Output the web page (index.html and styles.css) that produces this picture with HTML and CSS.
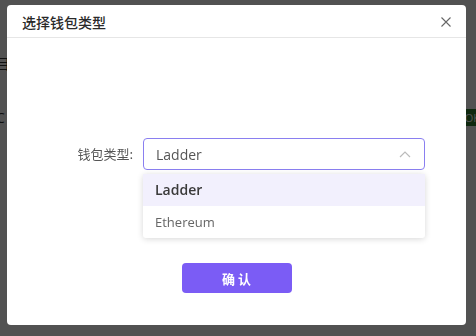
FILE: index.html
```html
<!DOCTYPE html>
<html>
<head>
<meta charset="utf-8">
<link rel="stylesheet" href="styles.css">
</head>
<body>
<div class="page">
  <div class="page-row"><span class="page-text">目</span></div>
  <div class="page-row2"><span class="page-text">C</span><span class="badge">OK</span></div>
</div>
<div class="overlay"></div>
<div class="modal">
  <div class="modal-header">
    <span class="modal-title">选择钱包类型</span>
    <svg class="close" width="12" height="12" viewBox="0 0 12 12"><path d="M1.5 1.5L10.5 10.5M10.5 1.5L1.5 10.5" stroke="#666" stroke-width="1.1" fill="none"/></svg>
  </div>
  <div class="modal-body">
    <div class="form-row">
      <label class="form-label">钱包类型:</label>
      <div class="select">
        <div class="select-box">
          <span class="select-value">Ladder</span>
          <svg class="arrow" width="12" height="8" viewBox="0 0 12 8"><path d="M1 7L6 2L11 7" stroke="#bbb" stroke-width="1.2" fill="none"/></svg>
        </div>
        <ul class="dropdown">
          <li class="option selected">Ladder</li>
          <li class="option">Ethereum</li>
        </ul>
      </div>
    </div>
    <div class="actions">
      <button class="btn">确 认</button>
    </div>
  </div>
</div>
</body>
</html>
```
FILE: styles.css
```css
html, body {
  margin: 0;
  padding: 0;
  width: 476px;
  height: 336px;
  overflow: hidden;
  font-family: "Open Sans", "Noto Sans CJK SC", sans-serif;
}
.page {
  background: #fff;
  height: 336px;
  padding-top: 52px;
  box-sizing: border-box;
}
.page-row {
  height: 20px;
}
.page-row2 {
  margin-top: 36px;
  display: flex;
  justify-content: space-between;
  align-items: center;
}
.page-text {
  font-size: 14px;
  color: #333;
  margin-left: -4px;
}
.badge {
  background: #2f7d2f;
  color: #fff;
  font-size: 11px;
  padding: 1px 6px;
  margin-right: -10px;
}
.overlay {
  position: fixed;
  inset: 0;
  background: rgba(0, 0, 0, 0.68);
}
.modal {
  position: fixed;
  left: 7px;
  top: 5px;
  width: 459px;
  height: 320px;
  background: #fff;
  border-radius: 4px;
  display: flex;
  flex-direction: column;
}
.modal-header {
  height: 32px;
  border-bottom: 1px solid #e6e6e6;
  display: flex;
  align-items: center;
  justify-content: space-between;
  padding: 0 14px 0 15px;
}
.modal-title {
  font-family: "Noto Sans CJK SC", sans-serif;
  font-size: 14px;
  font-weight: 500;
  color: #2a2a2a;
  padding-top: 1px;
}
.close {
  margin-top: 1px;
}
.modal-body {
  padding-top: 100px;
}
.form-row {
  display: flex;
  align-items: flex-start;
}
.form-label {
  width: 126px;
  text-align: right;
  line-height: 32px;
  font-family: "Noto Sans CJK SC", sans-serif;
  font-size: 13px;
  color: #555;
  margin-right: 10px;
}
.select {
  position: relative;
  width: 282px;
}
.select-box {
  height: 32px;
  box-sizing: border-box;
  border: 1px solid #8a7ff0;
  border-radius: 4px;
  display: flex;
  align-items: center;
  justify-content: space-between;
  padding: 0 13px 0 12px;
}
.select-value {
  font-size: 14px;
  color: #555;
}
.dropdown {
  position: absolute;
  top: 36px;
  left: 0;
  right: 0;
  margin: 0;
  padding: 0;
  list-style: none;
  background: #fff;
  border-radius: 3px;
  box-shadow: 0 1px 6px rgba(0, 0, 0, 0.16);
  z-index: 2;
}
.option {
  height: 32px;
  line-height: 32px;
  padding-left: 12px;
  font-size: 13px;
  color: #666;
}
.option.selected {
  background: #f2f0fd;
  color: #3a3a3a;
  font-weight: 600;
  font-size: 14px;
}
.actions {
  display: flex;
  justify-content: center;
  margin-top: 93px;
}
.btn {
  width: 110px;
  height: 30px;
  border: none;
  border-radius: 4px;
  background: #7b5cf5;
  color: #fff;
  font-family: "Noto Sans CJK SC", sans-serif;
  font-size: 13px;
  font-weight: 700;
  padding: 0;
}
```
